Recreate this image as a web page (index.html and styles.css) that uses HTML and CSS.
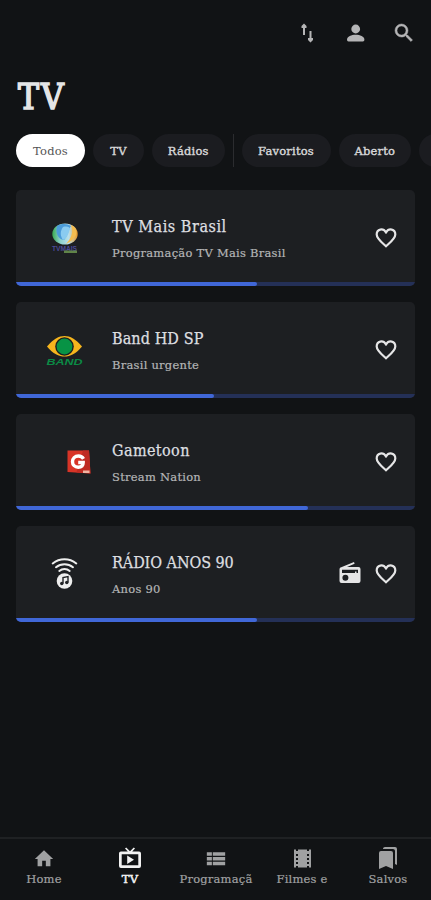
FILE: index.html
```html
<!DOCTYPE html>
<html lang="pt-BR">
<head>
<meta charset="utf-8">
<title>TV</title>
<link rel="stylesheet" href="styles.css">
</head>
<body>
<div class="app">
  <header class="toolbar">
    <svg class="tool" viewBox="0 0 24 24"><path d="M8 14V6H6.500v-.5L8 4l1.500 1.500V6H8M14.500 10v8H13v.5l1.500 1.500 1.500-1.500V18h-1.500"/></svg>
    <svg class="tool" viewBox="0 0 24 24"><circle cx="11.700" cy="8" r="4.400"/><path d="M3 18.600c0-3.300 4.400-4.900 8.700-4.900s8.700 1.600 8.700 4.900c0 1.200-.5 1.900-1.600 1.900H4.600c-1.100 0-1.600-.7-1.600-1.900z"/></svg>
    <svg class="tool" viewBox="0 0 24 24"><path class="lens" d="M15.500 14h-.79l-.28-.27A6.470 6.470 0 0 0 16 9.500 6.500 6.500 0 1 0 9.500 16c1.610 0 3.090-.59 4.230-1.570l.27.28v.79l5 4.990L20.490 19l-4.990-5zm-6 0a4.500 4.500 0 1 1 0-9 4.500 4.500 0 0 1 0 9z"/></svg>
  </header>
  <h1>TV</h1>
  <div class="chips">
    <span class="chip active w69">Todos</span>
    <span class="chip w51">TV</span>
    <span class="chip w73">Rádios</span>
    <i class="divider"></i>
    <span class="chip w89">Favoritos</span>
    <span class="chip w73">Aberto</span>
    <span class="chip w73"></span>
  </div>
  <main>
    <article class="card">
      <div class="row">
        <div class="logo"><svg width="96" height="92" viewBox="0 0 96 92">
          <defs><linearGradient id="globe"><stop stop-color="#39aa50"/><stop offset=".3" stop-color="#8bd0c9"/><stop offset=".65" stop-color="#b9dfed"/><stop offset="1" stop-color="#ee9a21"/></linearGradient></defs>
          <ellipse cx="49" cy="42" rx="12.700" ry="10.500" fill="url(#globe)"/>
          <path d="M41 34c5-3 11-2 14 0-3 4-2 8-7 14-6-1-9-7-7-14z" fill="#4b9bd9"/><path d="M47 35c4-1 7 0 7 2-2 6-3 9-7 11-3-4-3-9 0-13z" fill="#8acbf0"/>
          <path d="M55 33c5 2 6 6 5 10-2 4-5 7-10 9 5-6 8-11 5-19z" fill="#f4bd50"/>
          <text class="mini" x="36" y="59" textLength="25" lengthAdjust="spacingAndGlyphs">TVMAIS</text><path d="M48 58.500h13V61H48z" fill="#608448"/></svg></div>
        <div class="info"><h2 class="t1">TV Mais Brasil</h2><p>Programação TV Mais Brasil</p></div>
        <svg class="heart" viewBox="0 0 24 24"><path d="M12 20.200C7.400 16 2.700 12.500 2.700 8.400c0-5.500 6.400-6.600 9.300-2.100 2.900-4.500 9.300-3.400 9.300 2.100 0 4.100-4.700 7.600-9.300 11.800z"/></svg>
      </div>
      <div class="track"><div class="bar" style="width:60.3%"></div></div>
    </article>
    <article class="card">
      <div class="row">
        <div class="logo"><svg width="96" height="92" viewBox="0 0 96 92">
          <path d="M31 42.500C37 35 43 32 48.500 32S60 35 66 42.500C60 50 54 52.500 48.500 52.500S37 50 31 42.500z" fill="#f6b51d"/><circle cx="48.500" cy="42.500" r="9.300" fill="#1b1d20"/><circle cx="48.500" cy="42.500" r="7.900" fill="#079345"/>
          <text class="band" x="30.500" y="60.500" textLength="36" lengthAdjust="spacingAndGlyphs">BAND</text></svg></div>
        <div class="info"><h2 class="t2">Band HD SP</h2><p>Brasil urgente</p></div>
        <svg class="heart" viewBox="0 0 24 24"><path d="M12 20.200C7.400 16 2.700 12.500 2.700 8.400c0-5.500 6.400-6.600 9.300-2.100 2.900-4.500 9.300-3.400 9.300 2.100 0 4.100-4.700 7.600-9.300 11.800z"/></svg>
      </div>
      <div class="track"><div class="bar" style="width:49.7%"></div></div>
    </article>
    <article class="card">
      <div class="row">
        <div class="logo"><svg width="96" height="92" viewBox="0 0 96 92">
          <path d="M51.500 34.500H73l1.500 23L51.500 56z" fill="#d83427"/><path d="M67 34.500h6l1.500 23-14-1z" fill="#bf2b23"/>
          <path d="M67.500 42.800c-1.200-2-3-2.800-5-2.800-3.700 0-6 2.500-6 5.700s2.300 5.500 5.700 5.500c3 0 5-1.500 5-4.700h-5" fill="none" stroke="#fff" stroke-width="3.400"/><path d="M67 54.500h6.500V57H67z" fill="#f0b4a3"/></svg></div>
        <div class="info"><h2 class="t3">Gametoon</h2><p>Stream Nation</p></div>
        <svg class="heart" viewBox="0 0 24 24"><path d="M12 20.200C7.400 16 2.700 12.500 2.700 8.400c0-5.500 6.400-6.600 9.300-2.100 2.900-4.500 9.300-3.400 9.300 2.100 0 4.100-4.700 7.600-9.300 11.800z"/></svg>
      </div>
      <div class="track"><div class="bar" style="width:73.1%"></div></div>
    </article>
    <article class="card">
      <div class="row">
        <div class="logo"><svg width="96" height="92" viewBox="0 0 96 92">
          <path d="M36.700 35.500c7-5.600 16.600-5.600 23.600 0M40 39.200c5-4 12-4 17 0M43.300 42.900c3-2.500 7.400-2.500 10.400 0" fill="none" stroke="#eee" stroke-width="2" stroke-linecap="round"/>
          <circle cx="48.500" cy="53" r="7.800" fill="#eee"/><path d="M47 55.500v-6l5-1v6" fill="none" stroke="#202225" stroke-width="1.400"/><circle cx="45.800" cy="55.500" r="1.700" fill="#202225"/><circle cx="50.800" cy="54.500" r="1.700" fill="#202225"/></svg></div>
        <div class="info"><h2 class="t4">RÁDIO ANOS 90</h2><p>Anos 90</p></div>
        <svg class="radio" viewBox="0 0 24 24"><path fill-rule="evenodd" d="M3.240 6.150C2 6.600 1.500 7.200 1.500 8.500V20a2 2 0 0 0 2 2h17a2 2 0 0 0 2-2V8a2 2 0 0 0-2-2H9l7.600-3.300L16 1zM4 8.800h16v3.200h-1.500v-1.500H17V12H4zM7.400 13.700a3 3 0 1 1 0 6 3 3 0 0 1 0-6z"/></svg>
        <svg class="heart" viewBox="0 0 24 24"><path d="M12 20.200C7.400 16 2.700 12.500 2.700 8.400c0-5.500 6.400-6.600 9.300-2.100 2.900-4.500 9.300-3.400 9.300 2.100 0 4.100-4.700 7.600-9.300 11.800z"/></svg>
      </div>
      <div class="track"><div class="bar" style="width:60.3%"></div></div>
    </article>
  </main>
  <nav>
    <a><svg viewBox="0 0 24 24"><path d="M10 20v-6h4v6h5v-8h3L12 2.500 2 12h3v8z"/></svg><span>Home</span></a>
    <a class="current"><svg viewBox="0 0 24 24"><path fill-rule="evenodd" d="M3 4.500h6.800L7 1.600 8.200.5 12 4.200 15.800.5 17 1.600l-2.800 2.900H21a2 2 0 0 1 2 2V19a2 2 0 0 1-2 2H3a2 2 0 0 1-2-2V6.500c0-1.100.9-2 2-2zm.7 2.700v11h16.600v-11zM9.200 8.500l6.800 4.200-6.800 4.200z"/></svg><span>TV</span></a>
    <a><svg viewBox="0 0 24 24"><path d="M2 4.500h5.500v4H2zM8.500 4.500H22v4H8.500zM2 9.700h5.500v4H2zM8.500 9.700H22v4H8.500zM2 14.900h5.500v4H2zM8.500 14.900H22v4H8.500z"/></svg><span>Programaçã</span></a>
    <a><svg viewBox="0 0 24 24"><path d="M19 2.500v1.500h-2V2.500H8V4H6V2.500H4v18h2V19h2v1.500h9V19h2v1.500h2v-18zM8 17H6v-2h2zm0-4H6v-2h2zm0-4H6V7h2zm11 8h-2v-2h2zm0-4h-2v-2h2zm0-4h-2V7h2z"/></svg><span>Filmes e</span></a>
    <a><svg viewBox="0 0 24 24"><path d="m19 17 2 1V2a2 2 0 0 0-2-2H8.990C7.890 0 7 .9 7 2h10c1.100 0 2 .9 2 2v13zM15 4H5a2 2 0 0 0-2 2v16l7-3 7 3V6a2 2 0 0 0-2-2z"/></svg><span>Salvos</span></a>
  </nav>
</div>
</body>
</html>
```
FILE: styles.css
```css
* { box-sizing: border-box; }
body { margin: 0; background: #111315; font-family: "DejaVu Serif", serif; color: #dedfe0; overflow: hidden; }
.app { width: 431px; height: 900px; display: flex; flex-direction: column; }
.toolbar { height: 66px; display: flex; justify-content: flex-end; align-items: center; gap: 24px; padding-right: 15.500px; }
.tool { width: 24px; height: 24px; fill: #b5b5b6; }
.tool:first-child { stroke: #b5b5b6; stroke-width: 2; }
.lens { stroke: #b5b5b6; stroke-width: .5; }
h1 { margin: 8px 0 0 18px; height: 46px; font-family: "DejaVu Serif Condensed", "DejaVu Serif", serif; font-stretch: condensed; font-size: 35px; line-height: 46px; font-weight: 400; letter-spacing: 2px; color: #e4e5e6; -webkit-text-stroke: 1.500px #e4e5e6; }
.chips { margin: 14px 0 0 16px; height: 33px; display: flex; align-items: center; gap: 8px; overflow: hidden; flex-shrink: 0; }
.chip { height: 33px; border-radius: 17px; background: #1b1c20; display: flex; align-items: center; justify-content: center; flex-shrink: 0; padding-top: 1px; font-size: 11.500px; letter-spacing: .2px; color: #d7d7d8; -webkit-text-stroke: .4px; }
.active { background: #fff; color: #555; -webkit-text-stroke: 0; }
.w69 { width: 69px; }
.w51 { width: 51px; }
.w73 { width: 72.500px; }
.w89 { width: 89px; }
.divider { width: 1px; height: 33px; background: #2b2c2f; flex-shrink: 0; }
main { padding: 23px 16px 0; display: flex; flex-direction: column; gap: 16px; }
.card { height: 96px; border-radius: 5px; overflow: hidden; background: #1d1f22; }
.row { height: 92px; display: flex; align-items: center; padding-right: 17.500px; }
.logo { width: 96px; height: 92px; flex-shrink: 0; margin-top: 4px; }
.logo svg { display: block; }
.info { flex: 1; white-space: nowrap; padding-top: 6px; }
h2 { margin: 0; font-family: "DejaVu Serif Condensed", "DejaVu Serif", serif; font-stretch: condensed; font-size: 16px; line-height: 22px; font-weight: 400; color: #dedfe0; -webkit-text-stroke: .25px; }
.t1 { letter-spacing: .55px; }
.t2 { letter-spacing: .1px; }
.t3 { letter-spacing: .4px; }
.t4 { letter-spacing: -.05px; }
p { margin: 5px 0 0; font-size: 11.500px; line-height: 20px; letter-spacing: .25px; color: #b4b5b6; -webkit-text-stroke: .2px; }
.heart { width: 24px; height: 24px; margin-top: 4px; fill: none; stroke: #e5e5e6; stroke-width: 2.200; }
.radio { width: 24px; height: 24px; margin: 2px 12px 0 0; fill: #e5e5e6; }
.track { height: 4px; background: #243057; }
.bar { height: 4px; background: #4067d7; border-radius: 0 2px 2px 0; }
.mini { font: 700 7px "Liberation Sans", sans-serif; fill: #4c4a97; }
.band { font: italic 700 9px "Liberation Sans", sans-serif; fill: #0b8a45; }
nav { margin-top: auto; height: 63px; border-top: 2px solid #1f2123; display: flex; padding-left: 1px; }
nav a { flex: 1 1 0; min-width: 0; display: flex; flex-direction: column; align-items: center; padding-top: 8px; color: #a0a1a2; font-size: 11.500px; letter-spacing: .2px; -webkit-text-stroke: .2px; }
nav svg { width: 24px; height: 24px; fill: currentColor; flex-shrink: 0; }
nav a:first-child svg, nav a:nth-child(3) svg { width: 22px; }
nav span { line-height: 17px; white-space: nowrap; }
nav .current { color: #f2f2f2; -webkit-text-stroke: .5px; }
```
